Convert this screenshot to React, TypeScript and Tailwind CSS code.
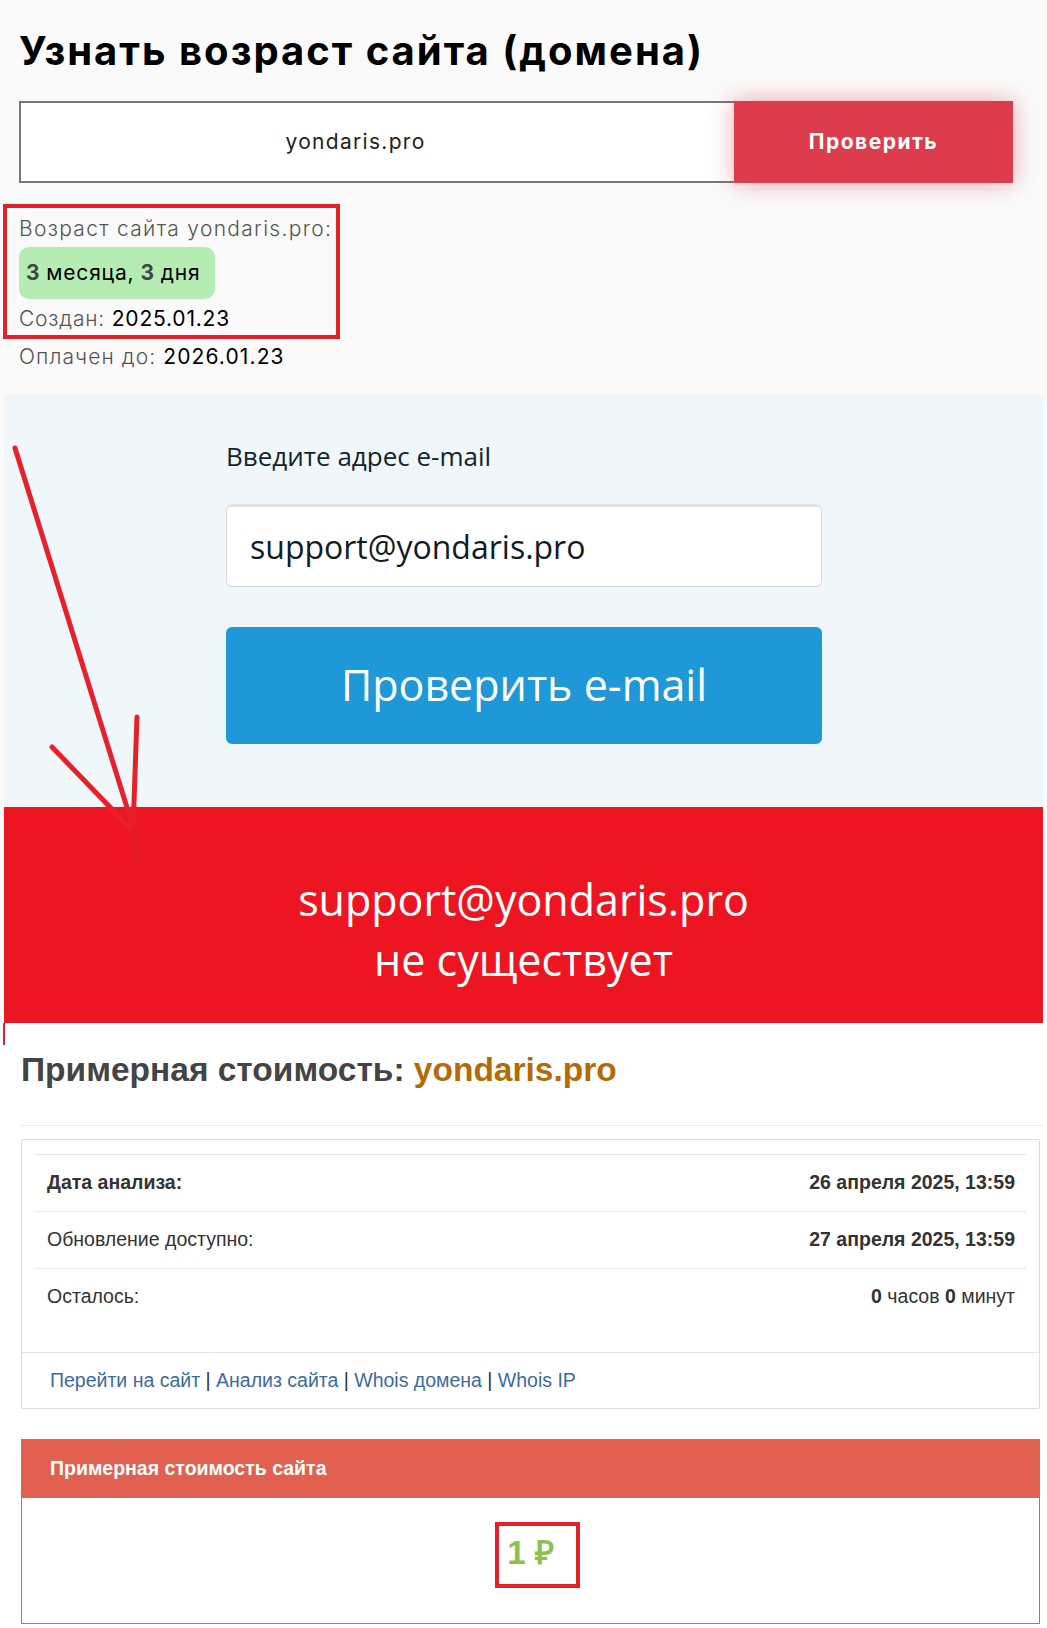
import React from 'react';

const TOP_FONT = { fontFamily: 'Inter, "Open Sans", sans-serif' };
const MAIL_FONT = { fontFamily: '"Open Sans", "Noto Sans", sans-serif' };
const ARIAL = { fontFamily: '"Liberation Sans", Arial, sans-serif' };

const Row: React.FC<{ label: React.ReactNode; value: React.ReactNode; bold?: boolean }> = ({ label, value, bold }) => (
  <div className="flex h-[57px] items-center justify-between border-t border-[#e7e7e7] pl-[12px] pr-[11px] text-[19.5px] text-[#333]">
    <span className={bold ? 'font-bold' : ''}>{label}</span>
    <span>{value}</span>
  </div>
);

export default function App() {
  return (
    <div className="relative min-h-[1628px] w-[1047px] overflow-hidden bg-white">
      {/* Возраст домена */}
      <section className="bg-[#fafafa] px-[19px] pb-[24px] pt-[31px]" style={TOP_FONT}>
        <h1 className="text-[40px] font-bold leading-[40px] tracking-[2px] text-black">
          Узнать возраст сайта (домена)
        </h1>
        <div className="mr-[15px] mt-[30px] flex h-[82px]">
          <div className="flex flex-1 items-center justify-center border-2 border-r-0 border-[#777] bg-white pr-[44px] text-[21px] tracking-[1.3px] text-[#222]">
            yondaris.pro
          </div>
          <button className="w-[279px] bg-[#dd3c4c] text-[21px] font-bold tracking-[1.5px] text-white shadow-[0_0_22px_rgba(226,60,76,0.45)]">
            Проверить
          </button>
        </div>
        <div className="mt-[32px] text-[21px] leading-[28px]">
          <div className="font-light tracking-[1.3px] text-[#555]">Возраст сайта yondaris.pro:</div>
          <div className="mt-[4px] flex h-[52px] w-[196px] items-center rounded-[10px] bg-[#b5ecb3] pl-[7px] tracking-[0.8px] text-black">
            <b className="mr-[6px] text-[#444]">3</b>месяца,<b className="mx-[6px] text-[#444]">3</b>дня
          </div>
          <div className="mt-[6px] tracking-[0.8px]">
            <span className="font-light text-[#555]">Создан: </span>
            <span className="text-black">2025.01.23</span>
          </div>
          <div className="mt-[10px] tracking-[1.1px]">
            <span className="font-light text-[#555]">Оплачен до: </span>
            <span className="text-black">2026.01.23</span>
          </div>
        </div>
      </section>

      {/* Проверка e-mail */}
      <div className="bg-[#fafafa] px-[4px]">
        <section className="bg-[#eff7fb] pb-[63px] pl-[222px] pt-[45px]" style={MAIL_FONT}>
          <div className="w-[596px]">
            <div className="text-[26px] font-medium leading-[32px] text-[#122530]">Введите адрес e-mail</div>
            <div className="mt-[32px] flex h-[83px] items-center rounded-[6px] border border-[#dadada] border-t-[3px] border-t-[#e2e2e2] bg-white pl-[23px] text-[32px] text-[#0e1d26]">
              support@yondaris.pro
            </div>
            <button className="mt-[40px] flex h-[117px] w-full items-center justify-center rounded-[6px] bg-[#1e98d6] text-[43px] text-white">
              Проверить e-mail
            </button>
          </div>
        </section>
        <section className="bg-[#ee1522] pb-[33px] pt-[63px] text-center text-[43px] leading-[60px] text-white" style={MAIL_FONT}>
          <div>support@yondaris.pro</div>
          <div>не существует</div>
        </section>
      </div>

      {/* Стоимость */}
      <section className="px-[21px] pt-[29px]" style={ARIAL}>
        <h2 className="text-[33.5px] font-bold leading-[36px] text-[#444]">
          Примерная стоимость: <span className="text-[#b56a08]">yondaris.pro</span>
        </h2>
        <hr className="mr-[-17px] mt-[37px] border-t border-[#eaeaea]" />
        <div className="mr-[-14px] mt-[13px] rounded-[2px] border border-[#dcdcdc]">
          <div className="px-[13px] pb-[27px] pt-[14px]">
            <Row label="Дата анализа:" bold value={<b>26 апреля 2025, 13:59</b>} />
            <Row label="Обновление доступно:" value={<b>27 апреля 2025, 13:59</b>} />
            <Row label="Осталось:" value={<><b>0</b> часов <b>0</b> минут</>} />
          </div>
          <div className="flex h-[56px] items-center border-t border-[#e3e3e3] pl-[28px] text-[19.5px] text-[#333]">
            <a className="text-[#3b6b9f]">Перейти на сайт</a>&nbsp;|&nbsp;
            <a className="text-[#3b6b9f]">Анализ сайта</a>&nbsp;|&nbsp;
            <a className="text-[#3b6b9f]">Whois домена</a>&nbsp;|&nbsp;
            <a className="text-[#3b6b9f]">Whois IP</a>
          </div>
        </div>
        <div className="mr-[-14px] mt-[30px] border border-[#e26050]">
          <div className="flex h-[58px] items-center bg-[#e26050] pl-[28px] text-[19.5px] font-bold text-white">
            Примерная стоимость сайта
          </div>
          <div className="pb-[52px] pt-[37px] text-center text-[33px] font-bold leading-[36px] text-[#8cc152]">
            1 ₽
          </div>
        </div>
      </section>

      {/* Пометки поверх скриншота */}
      <div className="pointer-events-none absolute left-[3px] top-[204px] h-[135px] w-[337px] border-4 border-[#e3212b]" />
      <div className="pointer-events-none absolute left-[495px] top-[1522px] h-[66px] w-[85px] border-4 border-[#e3212b]" />
      <svg className="pointer-events-none absolute left-0 top-0" width="1047" height="1100" viewBox="0 0 1047 1100">
        <g stroke="#e8202a" strokeWidth="5" strokeLinecap="round" fill="none">
          <path d="M15 448 L134 830" />
          <path d="M52 747 L133 831" />
          <path d="M137 717 L133 831" />
        </g>
        <path d="M134 830 L138 860" stroke="#d92028" strokeWidth="4" strokeLinecap="round" />
        <path d="M4 1023 L4 1045" stroke="#e3212b" strokeWidth="2" />
      </svg>
    </div>
  );
}
